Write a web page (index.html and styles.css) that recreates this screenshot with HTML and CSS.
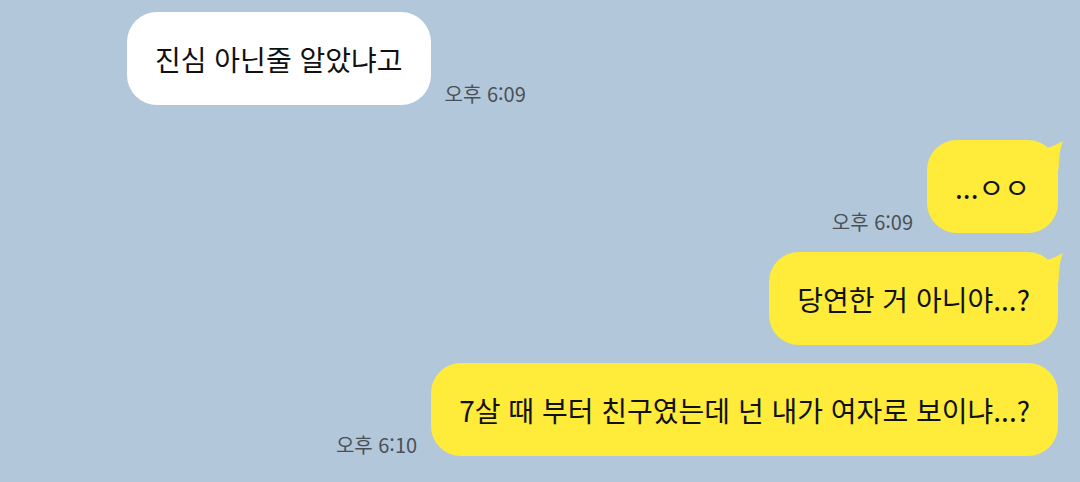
FILE: index.html
```html
<!DOCTYPE html>
<html lang="ko">
<head>
<meta charset="utf-8">
<title>채팅</title>
<link rel="stylesheet" href="styles.css">
</head>
<body>
<main class="chat">
  <div class="row received r1">
    <div class="bubble white">진심 아닌줄 알았냐고</div>
    <span class="time">오후 6:09</span>
  </div>
  <div class="row sent r2">
    <span class="time">오후 6:09</span>
    <div class="bubble yellow tailed">...ㅇㅇ
      <svg class="tail" viewBox="-30 0 36 32" width="36" height="32" aria-hidden="true"><path d="M-17 9 Q-7 8 5 1 Q1 10 0.5 30 L-17 30 Z" fill="#ffeb3a"/></svg>
    </div>
  </div>
  <div class="row sent r3">
    <div class="bubble yellow tailed">당연한 거 아니야...?
      <svg class="tail" viewBox="-30 0 36 32" width="36" height="32" aria-hidden="true"><path d="M-17 9 Q-7 8 5 1 Q1 10 0.5 30 L-17 30 Z" fill="#ffeb3a"/></svg>
    </div>
  </div>
  <div class="row sent r4">
    <span class="time">오후 6:10</span>
    <div class="bubble yellow">7살 때 부터 친구였는데 넌 내가 여자로 보이냐...?</div>
  </div>
</main>
</body>
</html>
```

FILE: styles.css
```css
html, body {
  margin: 0;
  padding: 0;
  background: #b2c7da;
  width: 1080px;
  height: 482px;
  overflow: hidden;
}
.chat {
  display: flex;
  flex-direction: column;
  padding: 12px 22px 0 127px;
  font-family: "Noto Sans CJK KR", "Noto Sans", sans-serif;
}
.row {
  display: flex;
  align-items: flex-end;
  gap: 14px;
}
.sent { justify-content: flex-end; }
.r2 { margin-top: 35px; }
.r3 { margin-top: 19px; }
.r4 { margin-top: 18px; }
.bubble {
  position: relative;
  height: 93px;
  box-sizing: border-box;
  padding: 0 28px;
  display: flex;
  align-items: center;
  border-radius: 30px;
  font-size: 28px;
  color: #111;
  white-space: nowrap;
}
.white { background: #ffffff; }
.yellow { background: #ffeb3a; }
.tail {
  position: absolute;
  top: 0;
  right: -6px;
}
.time {
  font-size: 20px;
  color: #4b5056;
  line-height: 22px;
  margin-bottom: 0;
  white-space: nowrap;
}
```
